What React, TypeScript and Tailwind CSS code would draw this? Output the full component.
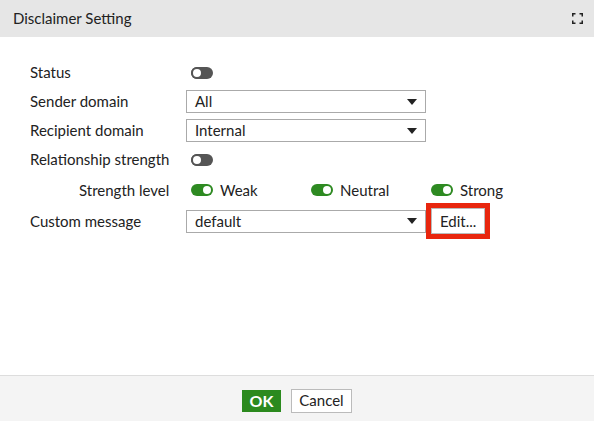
import React from 'react';

function Toggle({ on }: { on: boolean }) {
  if (on) {
    return (
      <span className="relative inline-block w-[22px] h-[12px] rounded-full bg-[#2e8a22]">
        <span className="absolute right-[2px] top-[2px] w-[8px] h-[8px] rounded-full bg-white" />
      </span>
    );
  }
  return (
    <span className="relative inline-block w-[22px] h-[12px] rounded-full bg-[#555]">
      <span className="absolute left-0 top-0 w-[12px] h-[12px] rounded-full bg-white border-2 border-[#555]" />
    </span>
  );
}

function Select({ value }: { value: string }) {
  return (
    <div className="flex items-center justify-between w-[240px] h-[23px] border border-[#aaa] bg-white pl-[8px] pr-[8px] text-[#222]">
      <span>{value}</span>
      <svg width="10" height="6" viewBox="0 0 10 6">
        <path d="M0 0 L10 0 L5 6 Z" fill="#222" />
      </svg>
    </div>
  );
}

export default function App() {
  return (
    <div
      className="w-[594px] h-[421px] flex flex-col bg-white text-[15px] text-[#222]"
      style={{ fontFamily: 'Lato, "Open Sans", sans-serif' }}
    >
      {/* Title bar */}
      <div className="h-[37px] shrink-0 flex items-center justify-between bg-[#e6e6e6] pl-[13px] pr-[11px]">
        <span className="text-[15px] text-[#222]">Disclaimer Setting</span>
        <svg width="11" height="11" viewBox="0 0 11 11" fill="none" stroke="#222" strokeWidth="1.5">
          <path d="M0.75 3.5 V0.75 H3.5 M7.5 0.75 H10.25 V3.5 M10.25 7.5 V10.25 H7.5 M3.5 10.25 H0.75 V7.5" />
        </svg>
      </div>

      {/* Form */}
      <div className="flex-1 pt-[21px] pl-[30px]">
        <div className="flex items-center h-[29px]">
          <span className="w-[156px]">Status</span>
          <span className="pl-[5px] flex"><Toggle on={false} /></span>
        </div>
        <div className="flex items-center h-[29px]">
          <span className="w-[156px]">Sender domain</span>
          <Select value="All" />
        </div>
        <div className="flex items-center h-[29px]">
          <span className="w-[156px]">Recipient domain</span>
          <Select value="Internal" />
        </div>
        <div className="flex items-center h-[29px]">
          <span className="w-[156px]">Relationship strength</span>
          <span className="pl-[5px] flex"><Toggle on={false} /></span>
        </div>
        <div className="flex items-center h-[32px]">
          <span className="w-[156px] pl-[49px]">Strength level</span>
          <div className="flex items-center pl-[5px]">
            <div className="flex items-center gap-[7px] w-[120px]">
              <Toggle on />
              <span>Weak</span>
            </div>
            <div className="flex items-center gap-[7px] w-[120px]">
              <Toggle on />
              <span>Neutral</span>
            </div>
            <div className="flex items-center gap-[7px]">
              <Toggle on />
              <span>Strong</span>
            </div>
          </div>
        </div>
        <div className="flex items-center h-[30px]">
          <span className="w-[156px]">Custom message</span>
          <Select value="default" />
          <div className="border-[5px] border-[#e8260e] flex">
            <button className="h-[26px] px-[8px] bg-white border border-[#bbb] text-[#222] leading-none">
              Edit...
            </button>
          </div>
        </div>
      </div>

      {/* Footer */}
      <div className="h-[46px] shrink-0 flex items-center justify-center gap-[10px] pt-[4px] bg-[#f4f4f4] border-t border-[#ddd]">
        <button className="h-[22px] w-[39px] bg-[#2b8a1e] text-white font-bold text-[16px] leading-none">
          OK
        </button>
        <button className="h-[24px] w-[61px] bg-white border border-[#bbb] text-[#222] text-[15px] leading-none">
          Cancel
        </button>
      </div>
    </div>
  );
}
